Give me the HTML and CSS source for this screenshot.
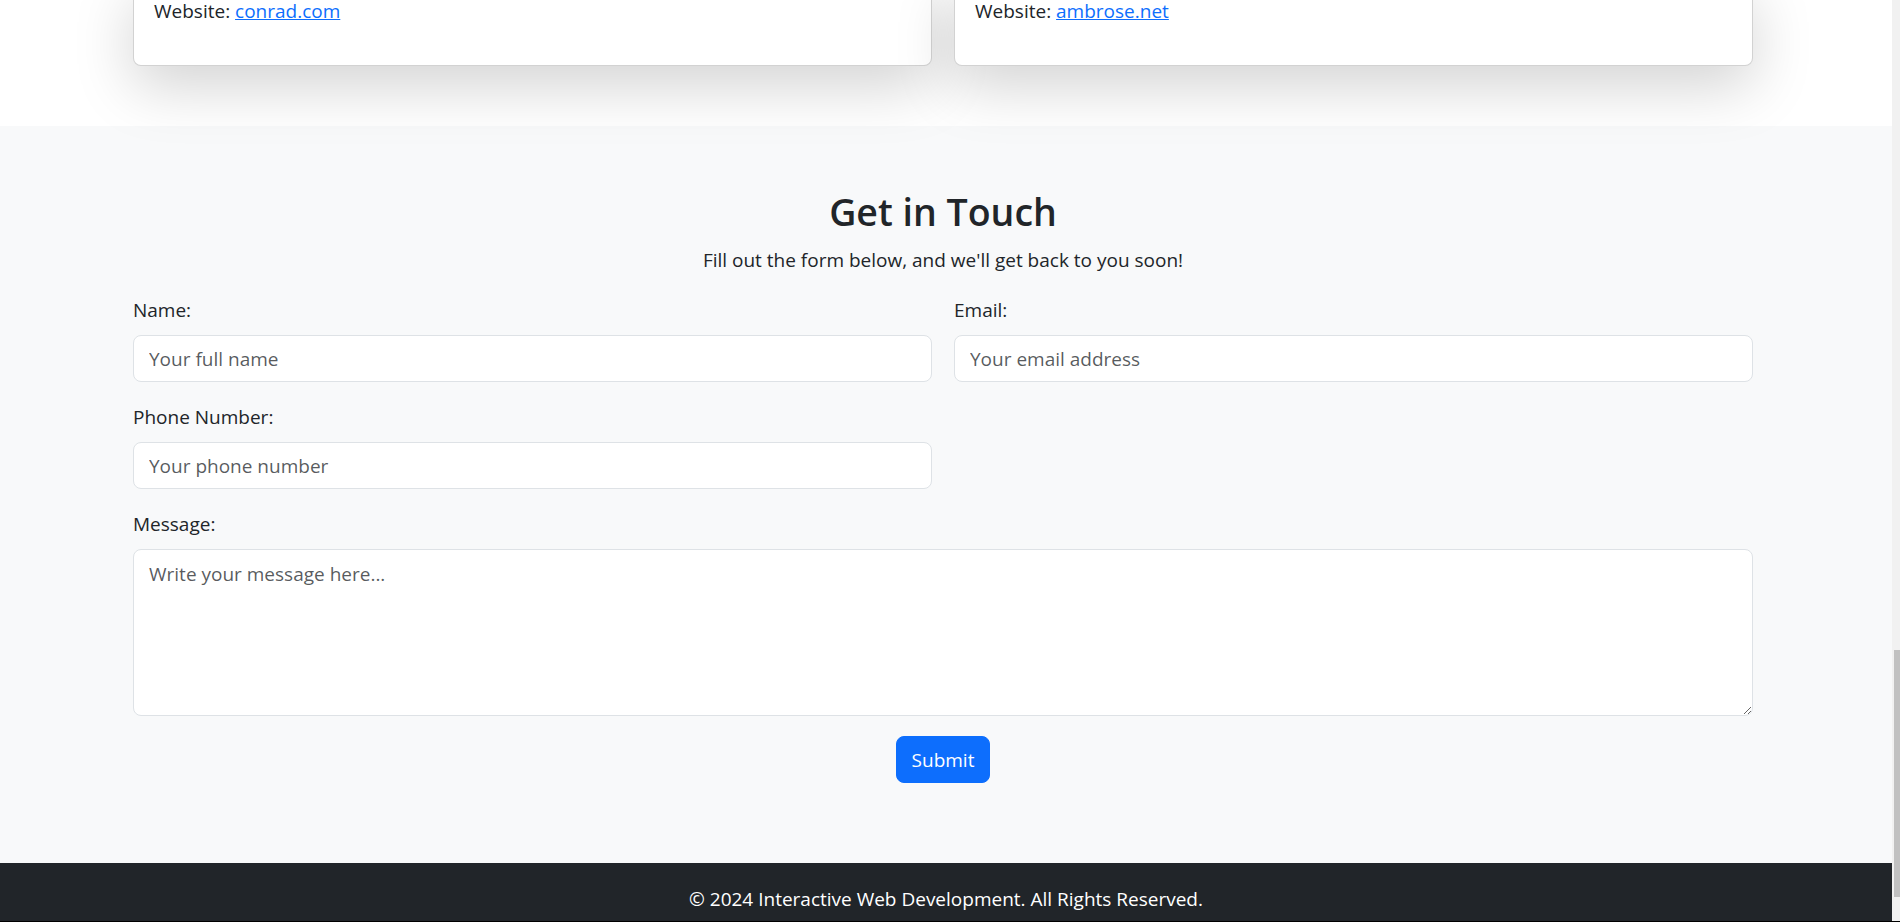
FILE: index.html
```html
<!DOCTYPE html>
<html lang="en">
<head>
<meta charset="utf-8">
<title>Interactive Web Development</title>
<link rel="stylesheet" href="styles.css">
</head>
<body>
<div class="window">
  <main class="page">
    <section class="team">
      <div class="container two-col">
        <div class="card">
          <p class="card-text">Website: <a href="#">conrad.com</a></p>
        </div>
        <div class="card">
          <p class="card-text">Website: <a href="#">ambrose.net</a></p>
        </div>
      </div>
    </section>

    <section class="contact">
      <div class="container">
        <h2 class="contact-title">Get in Touch</h2>
        <p class="contact-sub">Fill out the form below, and we'll get back to you soon!</p>
        <form class="contact-form">
          <div class="two-col">
            <div class="field">
              <label class="field-label" for="name">Name:</label>
              <input class="field-input" id="name" type="text" placeholder="Your full name">
            </div>
            <div class="field">
              <label class="field-label" for="email">Email:</label>
              <input class="field-input" id="email" type="email" placeholder="Your email address">
            </div>
            <div class="field">
              <label class="field-label" for="phone">Phone Number:</label>
              <input class="field-input" id="phone" type="tel" placeholder="Your phone number">
            </div>
          </div>
          <div class="field">
            <label class="field-label" for="message">Message:</label>
            <textarea class="field-input field-area" id="message" placeholder="Write your message here..."></textarea>
          </div>
          <div class="actions">
            <button class="btn-primary" type="submit">Submit</button>
          </div>
        </form>
      </div>
    </section>

    <footer class="site-footer">
      <p class="footer-text">© 2024 Interactive Web Development. All Rights Reserved.</p>
    </footer>
  </main>
  <div class="scrollbar">
    <div class="scroll-thumb"></div>
  </div>
</div>
</body>
</html>
```
FILE: styles.css
```css
* { box-sizing: border-box; }

html, body {
  margin: 0;
  padding: 0;
  height: 922px;
  overflow: hidden;
}

body {
  font-family: "Open Sans", "Noto Sans", sans-serif;
  font-size: 19px;
  line-height: 30px;
  color: #212529;
  background: #fff;
}

.window {
  display: flex;
  height: 922px;
  overflow: hidden;
  border-bottom: 1px solid #000;
}

.page {
  flex: 1;
  min-width: 0;
}

.container {
  width: 1620px;
  margin-left: 133px;
}

.two-col {
  display: grid;
  grid-template-columns: 1fr 1fr;
  column-gap: 22px;
}

/* team cards (only their bottom edge is in view) */
.team {
  margin-top: -20px;
  padding-bottom: 60px;
  background: #fff;
}

.card {
  background: #fff;
  border: 1px solid rgba(0, 0, 0, 0.175);
  border-radius: 8px;
  padding: 20px;
  box-shadow: 0 20px 60px rgba(0, 0, 0, 0.175);
}

.card-text {
  margin: 0 0 24px;
  line-height: 20px;
}

.card-text a {
  color: #0d6efd;
  text-decoration: underline;
}

/* contact */
.contact {
  background: #f8f9fa;
  padding: 62px 0 60px;
}

.contact-title {
  margin: 0 0 9px;
  font-size: 37.5px;
  line-height: 48px;
  font-weight: 600;
  text-align: center;
}

.contact-sub {
  margin: 0 0 20px;
  text-align: center;
}

.contact-form {
  margin-bottom: 20px;
}

.field {
  margin-bottom: 20px;
}

.field-label {
  display: block;
  margin-bottom: 10px;
}

.field-input {
  display: block;
  width: 100%;
  height: 47px;
  padding: 7px 15px;
  font-family: inherit;
  font-size: 19px;
  line-height: 30px;
  color: #212529;
  background: #fff;
  border: 1px solid #dee2e6;
  border-radius: 8px;
  outline: none;
}

.field-input::placeholder {
  color: rgba(33, 37, 41, 0.75);
}

.field-area {
  height: 167px;
  padding-top: 9px;
  resize: vertical;
}

.actions {
  display: flex;
  justify-content: center;
}

.btn-primary {
  font-family: inherit;
  font-size: 19px;
  line-height: 30px;
  padding: 7.5px 15px;
  color: #fff;
  background: #0d6efd;
  border: 1px solid #0d6efd;
  border-radius: 8px;
  cursor: pointer;
}

/* footer */
.site-footer {
  background: #212529;
  color: #fff;
  padding: 21px 0 20px;
  text-align: center;
}

.footer-text {
  margin: 0;
}

/* scrollbar strip */
.scrollbar {
  width: 8px;
  flex: none;
  background: #f1f1f1;
  padding-top: 650px;
}

.scroll-thumb {
  margin-left: 2px;
  height: 247px;
  background: #c1c1c1;
}
```
